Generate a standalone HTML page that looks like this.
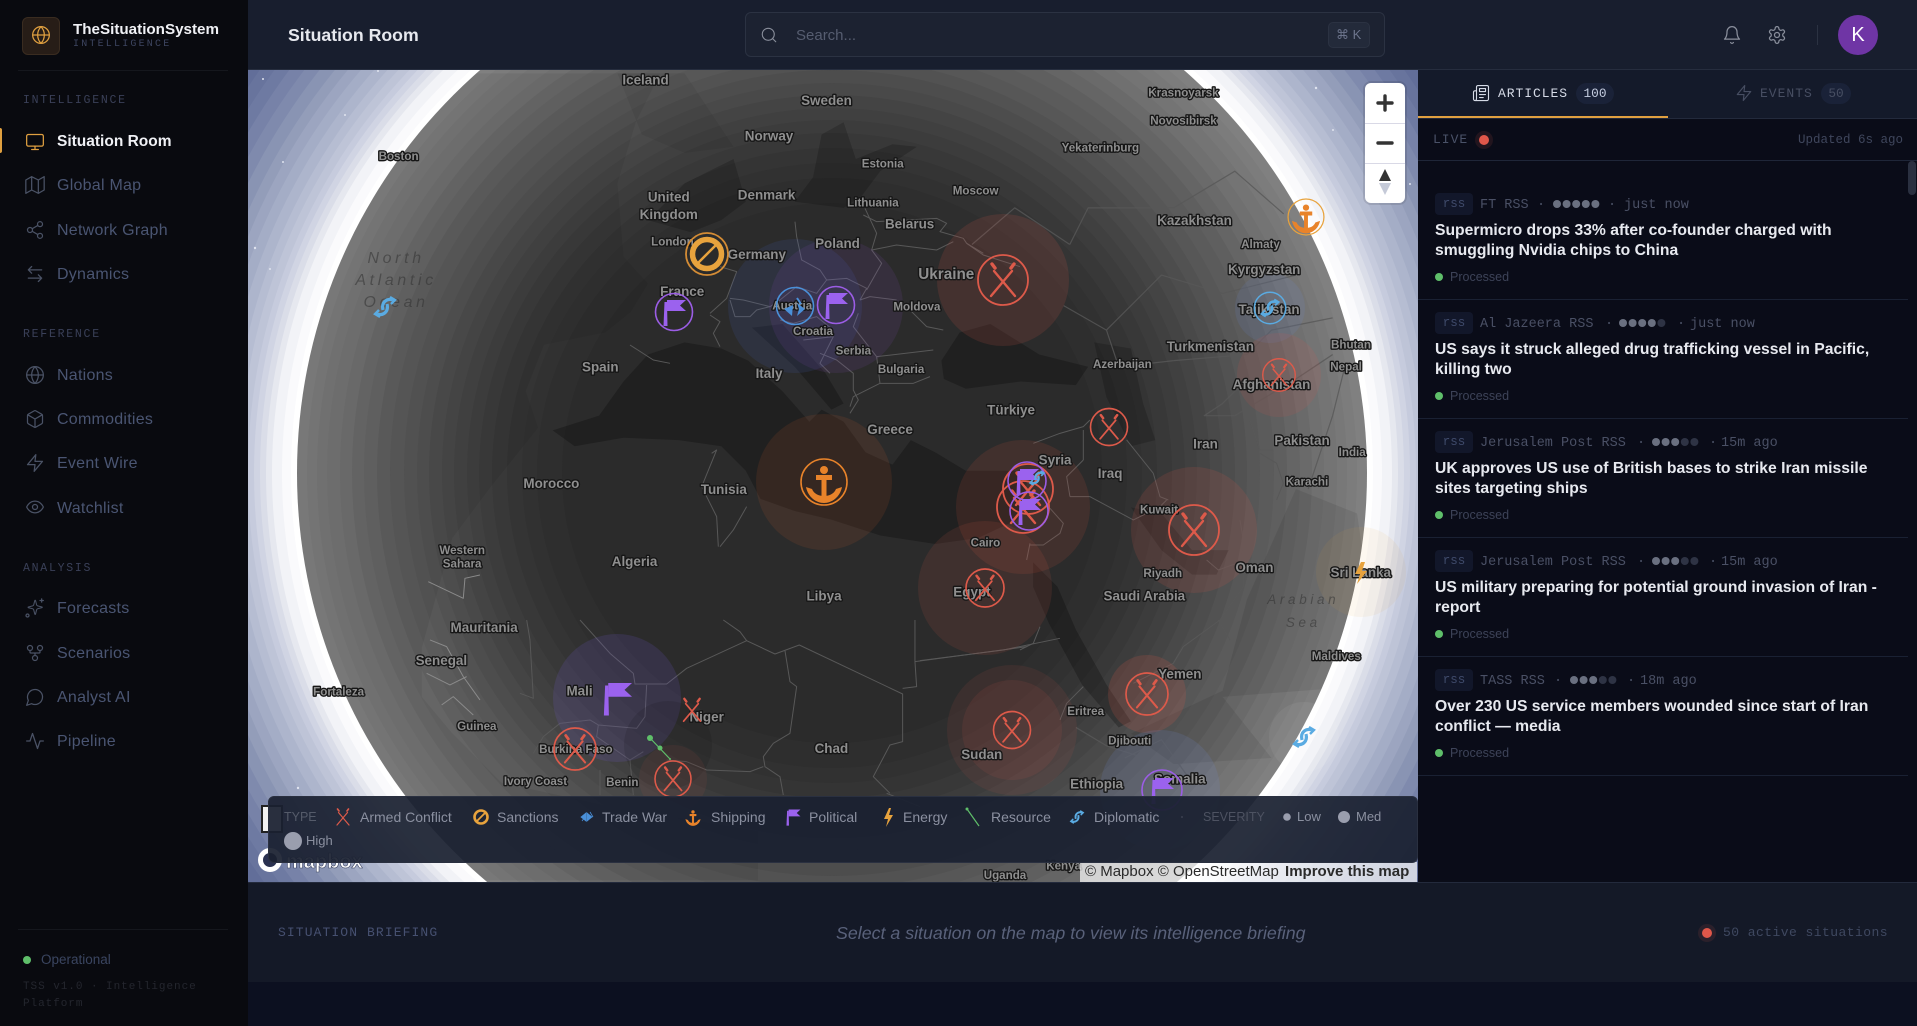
<!DOCTYPE html>
<html><head><meta charset="utf-8"><title>Situation Room</title>
<style>
html,body{margin:0;padding:0;width:1917px;height:1026px;overflow:hidden;background:#0c1020;font-family:"Liberation Sans",sans-serif}
.p{position:absolute}
.t{position:absolute;white-space:nowrap;line-height:20px;height:20px}
.m{font-family:"Liberation Mono",monospace}
.nav{left:57px;font-size:16px;letter-spacing:.25px;color:#4a5572}
.sec{left:23px;font-size:11.5px;letter-spacing:1.75px;color:#3a4058;font-family:"Liberation Mono",monospace}
.ttl{left:1435px;font-size:15.7px;font-weight:bold;color:#e7e9ef}
.proc{left:1450px;font-size:12.5px;color:#3d4358}
.rss{position:absolute;left:1435px;width:38px;height:22px;background:#12172a;border-radius:4px;color:#3f4a6a;font:12.5px/23px "Liberation Mono",monospace;text-align:center}
.meta{font:13.5px/20px "Liberation Mono",monospace;color:#4a5065;position:absolute;white-space:nowrap;height:20px}
.lg{font-size:14px;color:#8b90a0;top:807px}
svg text{font-family:"Liberation Sans",sans-serif}
.lb text{text-anchor:middle;paint-order:stroke;stroke:#161616;stroke-width:2.2px;fill:#8f8f8f;font-weight:bold;stroke-linejoin:round}
.s{font-size:9.5px}.n{font-size:11px}.b{font-size:12.5px}
.lb .f{fill:rgba(50,50,50,.55);stroke:none;font-style:italic;font-weight:normal;letter-spacing:3px}
.br polyline{fill:none;stroke:#585858;stroke-width:1;stroke-linejoin:round}
.i{fill:none;stroke:#4a5265;stroke-width:1.5;stroke-linecap:round;stroke-linejoin:round;overflow:visible}
</style></head><body>

<!-- MAP LAYER -->
<svg class="p" style="left:0;top:0" width="1917" height="1026" viewBox="0 0 1917 1026">
<defs>
<clipPath id="mc"><rect x="248" y="70" width="1170" height="812"/></clipPath>
<clipPath id="gc"><circle cx="832" cy="473" r="535"/></clipPath>
<g id="sw" fill="none" stroke="#dd5a4a" stroke-linecap="round">
<path d="M-11-16-8-12M11-16 8-12" stroke-width="3.4"/>
<path d="M-9-9 12 16M9-9-12 16" stroke-width="2.4"/>
</g>
<g id="fl"><path d="M-7-12H12L6-6.500 12-1H-7Z" fill="#9b62ee"/><path d="M-9.500-10-7-10-6.500 14H-10.500Z" fill="#9b62ee"/></g>
<g id="an" fill="#e8832a"><circle cx="0" cy="-12" r="4"/><path d="M-8-7H8V-2H2.500V16H-2.500V-2H-8Z"/><path d="M-18 5-12 7C-10 12-5 14 0 14S10 12 12 7L18 5C16 15 8 21 0 21S-16 15-18 5Z"/></g>
<g id="dp" fill="none" stroke="#5aabe2" stroke-width="3.2"><path d="M8-7C2-9-4-5-2 3"/><path d="M-8 7C-2 9 4 5 2-3"/><path d="M5-10 10-7 6-3M-5 10-10 7-6 3" stroke-width="2.4"/></g>
</defs>

<!-- background: concentric bands (clipped at map bottom) -->
<g clip-path="url(#mc)">
<rect x="248" y="70" width="1170" height="812" fill="#5c6892"/>
<path d="M249.2 882A712 712 0 1 1 1414.8 882Z" fill="#626e99"/>
<path d="M263.9 882A700 700 0 1 1 1400.1 882Z" fill="#68749d"/>
<path d="M278.8 882A688 688 0 1 1 1385.2 882Z" fill="#6e7aa2"/>
<path d="M293.8 882A676 676 0 1 1 1370.2 882Z" fill="#7782a8"/>
<path d="M308.9 882A664 664 0 1 1 1355.1 882Z" fill="#7f8aad"/>
<path d="M324.2 882A652 652 0 1 1 1339.8 882Z" fill="#8994b3"/>
<path d="M339.7 882A640 640 0 1 1 1324.3 882Z" fill="#939db9"/>
<path d="M352.8 882A630 630 0 1 1 1311.2 882Z" fill="#9ca5c0"/>
<path d="M366 882A620 620 0 1 1 1298 882Z" fill="#a4adc6"/>
<path d="M379.4 882A610 610 0 1 1 1284.6 882Z" fill="#adb5cc"/>
<path d="M393 882A600 600 0 1 1 1271 882Z" fill="#b6bdd2"/>
<path d="M404 882A592 592 0 1 1 1260 882Z" fill="#bec4d7"/>
<path d="M415.1 882A584 584 0 1 1 1248.9 882Z" fill="#c6cbdd"/>
<path d="M423.6 882A578 578 0 1 1 1240.4 882Z" fill="#d0d4e3"/>
<path d="M432.1 882A572 572 0 1 1 1231.9 882Z" fill="#dadde8"/>
<path d="M440.8 882A566 566 0 1 1 1223.2 882Z" fill="#e6e8ef"/>
<path d="M449.5 882A560 560 0 1 1 1214.5 882Z" fill="#f2f3f7"/>
<circle cx="832" cy="473" r="550" fill="#fafafc"/>
<circle cx="832" cy="473" r="541" fill="#ffffff"/>
<circle cx="832" cy="473" r="535" fill="#808080"/>
<circle cx="832" cy="473" r="525" fill="#7c7c7c"/>
<circle cx="832" cy="473" r="515" fill="#787878"/>
<circle cx="832" cy="473" r="505" fill="#747474"/>
<circle cx="832" cy="473" r="492" fill="#707070"/>
<circle cx="832" cy="473" r="480" fill="#6a6a6a"/>
<circle cx="832" cy="473" r="468" fill="#656565"/>
<circle cx="832" cy="473" r="455" fill="#5f5f5f"/>
<circle cx="832" cy="473" r="442" fill="#5b5b5b"/>
<circle cx="832" cy="473" r="428" fill="#575757"/>
<circle cx="832" cy="473" r="415" fill="#525252"/>
<circle cx="832" cy="473" r="403" fill="#4d4d4d"/>
<circle cx="832" cy="473" r="390" fill="#494949"/>
<circle cx="832" cy="473" r="378" fill="#444444"/>
<circle cx="832" cy="473" r="365" fill="#404040"/>
<circle cx="832" cy="473" r="353" fill="#3c3c3c"/>
<circle cx="832" cy="473" r="340" fill="#383838"/>
<circle cx="832" cy="473" r="325" fill="#343434"/>
<circle cx="832" cy="473" r="310" fill="#313131"/>
<circle cx="832" cy="473" r="295" fill="#2e2e2e"/>
<circle cx="832" cy="473" r="270" fill="#2b2b2b"/>
</g>

<g fill="#dfe3ef"><circle cx="263" cy="79" r="1"/><circle cx="345" cy="115" r="1"/><circle cx="378" cy="71" r="1"/><circle cx="283" cy="162" r="1"/><circle cx="255" cy="248" r="1.200"/><circle cx="270" cy="269" r="1"/><circle cx="1316" cy="88" r="1.200"/><circle cx="1333" cy="130" r="1"/><circle cx="1410" cy="184" r="1"/><circle cx="298" cy="788" r="1.200"/><circle cx="1320" cy="800" r="1"/></g>

<g clip-path="url(#gc)">
<g transform="scale(1.2226)">
<path d="M250 60H540L520 100 505 150 510 210 530 232 516 255 495 272 445 282 430 320 440 350 400 400 370 440 345 530 345 570 370 600 410 640 500 660 620 680 620 720H200Z" fill="#000" fill-opacity=".06"/>
<g fill="#000" fill-opacity=".18">
<path d="M452 352 490 340 510 312 530 290 560 280 590 285 612 295 640 320 662 345 672 335 690 345 708 370 730 380 745 360 765 370 790 385 830 385 840 395 832 425 800 440 765 445 720 438 680 425 650 418 622 408 610 385 590 365 555 360 510 358 470 365Z" fill-opacity=".25"/>
<path d="M615 268 640 265 675 305 690 330 680 335 650 300Z" fill-opacity=".25"/>
<path d="M770 295 785 272 810 265 850 290 890 300 880 315 835 312 790 318 772 310Z" fill-opacity=".25"/>
<path d="M895 280 925 285 935 330 945 360 925 365 905 325Z"/>
<path d="M925 415 950 420 975 450 1005 450 995 470 975 470 950 450Z"/>
<path d="M845 460 865 480 880 515 905 560 925 590 915 595 885 560 858 510 845 480Z" fill-opacity=".25"/>
<path d="M650 165 690 170 705 160 720 140 750 120 730 118 700 130 690 100 672 110 665 145Z"/>
<path d="M530 180 560 150 600 130 610 165 590 180 565 190Z"/>
<path d="M505 60 560 60 600 120 560 125 525 110Z" fill-opacity=".06"/>
</g>
<path d="M1060 400 1110 420 1130 560 1000 570 1040 620 960 625 925 600 1000 565 1020 490Z" fill="#000" fill-opacity=".08"/>
</g>

<!-- borders -->
<g class="br" transform="translate(620 200) scale(.3333)">
<polyline style="stroke-width:3" points="525,65 530,110 545,180 600,210 620,240"/>
<polyline style="stroke-width:3" points="735,25 770,100 755,150 785,190 740,270"/>
<polyline style="stroke-width:3" points="730,45 770,65 950,55 980,70 960,95 1030,115 1040,130 1090,160"/>
<polyline style="stroke-width:3" points="755,150 830,135 950,150 1000,125"/>
<polyline style="stroke-width:3" points="620,240 680,235 740,265 720,300"/>
<polyline style="stroke-width:3" points="330,295 370,300 450,320 480,300 530,260 590,280 620,240"/>
<polyline style="stroke-width:3" points="300,200 350,215 320,295 270,340"/>
<polyline style="stroke-width:3" points="270,345 300,365 280,400 300,440"/>
<polyline style="stroke-width:3" points="330,300 345,350 390,350 410,330 450,320"/>
<polyline style="stroke-width:3" points="480,360 520,370 590,350 640,390"/>
<polyline style="stroke-width:3" points="720,300 750,290 830,300"/>
<polyline style="stroke-width:3" points="715,340 700,380 770,470 940,450"/>
<polyline style="stroke-width:3" points="850,310 920,380 970,390"/>
<polyline style="stroke-width:3" points="770,470 780,550 700,590 690,620"/>
<polyline style="stroke-width:3" points="780,550 880,550 930,530"/>
<polyline style="stroke-width:3" points="600,460 650,480 700,520 700,570 715,600 690,640"/>
<polyline style="stroke-width:3" points="550,420 640,410 600,490 630,520"/>
<polyline style="stroke-width:3" points="275,760 290,750 245,860 290,950 295,1040"/>
<polyline style="stroke-width:3" points="380,920 340,990 300,1040"/>
<polyline style="stroke-width:3" points="30,435 100,480 150,490"/>
<polyline style="stroke-width:3" points="1040,130 1090,165 1200,200"/>
</g>
<g class="br" transform="translate(920 420) scale(.3333)">
<polyline style="stroke-width:3" points="490,120 440,170 450,230"/>
<polyline style="stroke-width:3" points="450,230 510,230 640,300 720,260 740,240"/>
<polyline style="stroke-width:3" points="390,265 430,310 420,340 370,375 330,375"/>
<polyline style="stroke-width:3" points="340,70 420,40 490,20 510,0"/>
<polyline style="stroke-width:3" points="490,30 490,120"/>
<polyline style="stroke-width:3" points="620,60 700,160 720,230 745,240"/>
<polyline style="stroke-width:3" points="860,420 895,450 950,430 970,420 970,500 900,600 790,680 760,730 640,790"/>
<polyline style="stroke-width:3" points="895,600 930,660"/>
<polyline style="stroke-width:3" points="960,300 970,360 960,420"/>
<polyline style="stroke-width:3" points="0,722 250,690 420,655"/>
<polyline style="stroke-width:3" points="330,370 320,420"/>
<polyline style="stroke-width:3" points="1020,100 1070,130 1090,190 1070,240"/>
<polyline style="stroke-width:3" points="990,0 1020,90 1060,90"/>
<polyline style="stroke-width:3" points="490,800 440,850 420,900"/>
<polyline style="stroke-width:3" points="360,620 340,670 300,690"/>
</g>
<g class="br" transform="translate(520 620) scale(.3333)">
<polyline style="stroke-width:3" points="180,0 270,100 340,160 345,192 440,192 500,145 680,62 765,102 838,75 1148,222 1148,365 1110,375 1060,470 1110,520"/>
<polyline style="stroke-width:3" points="795,92 810,185 830,200 810,340 760,370 730,410 735,440 780,470 790,525"/>
<polyline style="stroke-width:3" points="380,195 375,290 350,325 235,315 210,300 120,310 70,350 40,400"/>
<polyline style="stroke-width:3" points="235,315 230,350 330,420"/>
<polyline style="stroke-width:3" points="0,220 40,235 30,60 20,0"/>
<polyline style="stroke-width:3" points="1148,205 1190,200 1185,125 1520,80"/>
<polyline style="stroke-width:3" points="1185,125 1185,0"/>
<polyline style="stroke-width:3" points="440,420 500,425 560,450 690,455 730,440"/>
<polyline style="stroke-width:3" points="610,0 660,35 680,62"/>
<polyline style="stroke-width:3" points="370,395 330,420 340,525"/>
<polyline style="stroke-width:3" points="240,450 240,525"/>
<polyline style="stroke-width:3" points="1100,520 1200,560"/>
</g>
<g class="br" transform="translate(0 340) scale(.3333)">
<polyline style="stroke-width:3;stroke:#8a8a8a" points="1285,725 1390,775 1395,715 1440,705"/>
<polyline style="stroke-width:3;stroke:#8a8a8a" points="1290,900 1340,920 1390,1010 1440,1080"/>
<polyline style="stroke-width:3;stroke:#8a8a8a" points="1280,1000 1350,1035 1400,1010"/>
<polyline style="stroke-width:3;stroke:#8a8a8a" points="1325,1095 1360,1070 1420,1125"/>
</g>
<g class="br" transform="scale(1.2226)" style="opacity:.8">
<polyline points="875,200 890,170 960,170 1010,140 1050,175"/>
<polyline points="905,270 950,225 1000,240 1060,225"/>
<polyline points="960,295 1020,290 1040,270 1090,260"/>
<polyline points="1010,340 1060,310 1090,290"/>
<polyline points="1070,400 1090,340 1100,300"/>
<polyline points="870,250 905,270 915,300 960,295"/>
<polyline points="795,200 830,170 875,200"/>
<polyline points="1045,75 1060,130 1075,175"/>
<polyline points="1020,310 1000,330 985,340 1010,340"/>
<polyline points="920,620 950,605 975,640"/>
<polyline points="880,595 905,610 930,618"/>
</g>
</g>

<!-- halos -->
<g>
<circle cx="795" cy="306" r="67" fill="#4a6ed9" fill-opacity=".12"/>
<circle cx="836" cy="306" r="67" fill="#9b5de5" fill-opacity=".1"/>
<circle cx="1003" cy="280" r="66" fill="#d9574a" fill-opacity=".15"/>
<circle cx="824" cy="482" r="68" fill="#e8632a" fill-opacity=".11"/>
<circle cx="1023" cy="507" r="67" fill="#d9573a" fill-opacity=".13"/>
<circle cx="985" cy="588" r="67" fill="#d9574a" fill-opacity=".12"/>
<circle cx="1194" cy="530" r="63" fill="#d9574a" fill-opacity=".15"/>
<circle cx="1147" cy="694" r="39" fill="#d9574a" fill-opacity=".18"/>
<circle cx="1012" cy="730" r="65" fill="#d9574a" fill-opacity=".09"/>
<circle cx="1012" cy="730" r="50" fill="#d9574a" fill-opacity=".1"/>
<circle cx="617" cy="698" r="64" fill="#7a5de5" fill-opacity=".15"/>
<circle cx="668" cy="745" r="44" fill="#000" fill-opacity=".1"/>
<circle cx="673" cy="779" r="34" fill="#d9574a" fill-opacity=".08"/>
<circle cx="1160" cy="790" r="60" fill="#6f8ad9" fill-opacity=".15"/>
<circle cx="1304" cy="737" r="35" fill="#fff" fill-opacity=".06"/>
<circle cx="1270" cy="308" r="35" fill="#6f8ad9" fill-opacity=".13"/>
<circle cx="1279" cy="375" r="42" fill="#d9574a" fill-opacity=".13"/>
<circle cx="1361" cy="572" r="45" fill="#e8a33d" fill-opacity=".08"/>
</g>

<!-- labels -->
<g class="lb" transform="scale(1.2226)">
<text class="f" x="324" y="215" font-size="13">North</text><text class="f" x="324" y="233" font-size="13">Atlantic</text><text class="f" x="324" y="251" font-size="13">Ocean</text>
<text class="f" x="1066" y="494" font-size="11">Arabian</text><text class="f" x="1066" y="513" font-size="11">Sea</text>
<text class="n" x="528" y="69">Iceland</text><text class="n" x="676" y="86">Sweden</text><text class="n" x="629" y="115">Norway</text>
<text class="s" x="722" y="137">Estonia</text><text class="n" x="547" y="165">United</text><text class="n" x="547" y="179">Kingdom</text><text class="n" x="627" y="163">Denmark</text>
<text class="s" x="714" y="169">Lithuania</text><text class="n" x="744" y="187">Belarus</text><text class="s" x="798" y="159">Moscow</text><text class="s" x="326" y="131">Boston</text>
<text class="s" x="550" y="201">London</text><text class="n" x="619" y="212">Germany</text><text class="n" x="685" y="203">Poland</text><text class="b" x="774" y="228">Ukraine</text>
<text class="n" x="558" y="242">France</text><text class="s" x="750" y="254">Moldova</text><text class="s" x="648" y="253">Austria</text><text class="s" x="665" y="274">Croatia</text>
<text class="s" x="698" y="290">Serbia</text><text class="n" x="491" y="304">Spain</text><text class="n" x="629" y="309">Italy</text><text class="s" x="737" y="305">Bulgaria</text>
<text class="n" x="827" y="339">Türkiye</text><text class="n" x="728" y="355">Greece</text><text class="n" x="863" y="380">Syria</text><text class="n" x="908" y="391">Iraq</text><text class="n" x="986" y="367">Iran</text>
<text class="s" x="918" y="301">Azerbaijan</text><text class="n" x="990" y="287">Turkmenistan</text><text class="n" x="1040" y="318">Afghanistan</text><text class="n" x="1065" y="364">Pakistan</text>
<text class="s" x="1101" y="303">Nepal</text><text class="s" x="1105" y="285">Bhutan</text><text class="s" x="1106" y="373">India</text><text class="s" x="1069" y="397">Karachi</text>
<text class="n" x="977" y="184">Kazakhstan</text><text class="s" x="1031" y="203">Almaty</text><text class="n" x="1034" y="224">Kyrgyzstan</text><text class="n" x="1038" y="257">Tajikistan</text>
<text class="s" x="968" y="79">Krasnoyarsk</text><text class="s" x="968" y="102">Novosibirsk</text><text class="s" x="900" y="124">Yekaterinburg</text>
<text class="n" x="451" y="399">Morocco</text><text class="n" x="592" y="404">Tunisia</text><text class="n" x="519" y="463">Algeria</text><text class="n" x="674" y="491">Libya</text>
<text class="s" x="378" y="453">Western</text><text class="s" x="378" y="464">Sahara</text><text class="n" x="396" y="517">Mauritania</text><text class="n" x="361" y="544">Senegal</text>
<text class="s" x="277" y="569">Fortaleza</text><text class="s" x="390" y="597">Guinea</text><text class="s" x="471" y="616">Burkina Faso</text><text class="s" x="438" y="642">Ivory Coast</text><text class="s" x="509" y="643">Benin</text>
<text class="n" x="474" y="569">Mali</text><text class="n" x="578" y="590">Niger</text><text class="n" x="680" y="616">Chad</text><text class="s" x="806" y="447">Cairo</text><text class="n" x="795" y="488">Egypt</text>
<text class="s" x="951" y="472">Riyadh</text><text class="n" x="936" y="491">Saudi Arabia</text><text class="s" x="948" y="420">Kuwait</text><text class="n" x="1026" y="468">Oman</text><text class="n" x="965" y="555">Yemen</text>
<text class="s" x="888" y="585">Eritrea</text><text class="s" x="924" y="609">Djibouti</text><text class="n" x="803" y="621">Sudan</text><text class="n" x="897" y="645">Ethiopia</text><text class="n" x="965" y="641">Somalia</text>
<text class="n" x="1113" y="472">Sri Lanka</text><text class="s" x="1093" y="540">Maldives</text><text class="s" x="822" y="719">Uganda</text><text class="s" x="870" y="711">Kenya</text>
</g>

<!-- markers -->
<g fill="none">
<g transform="translate(707 254)"><circle r="21" stroke="#d48c35" stroke-width="1.800"/><circle r="14.500" stroke="#e8a33d" stroke-width="5.500" fill="#2a2a2a"/><path d="M-11 11 11-11" stroke="#e8a33d" stroke-width="2.500"/></g>
<g transform="translate(674 312)"><circle r="18.500" stroke="#9b5de5" stroke-width="1.600"/><use href="#fl"/></g>
<g transform="translate(795 306)"><circle r="18.500" stroke="#4a90d9" stroke-width="1.600"/><path d="M-2-1-11 3-3 10ZM2-3 10 3 2 10 4 3Z" fill="#4a90d9"/><path d="M2-8 6-2" stroke="#4a90d9" stroke-width="2"/></g>
<g transform="translate(836 305)"><circle r="18.500" stroke="#9b5de5" stroke-width="1.600"/><use href="#fl"/></g>
<g transform="translate(1003 280)"><circle r="25" stroke="#dd5a4a" stroke-width="1.800"/><use href="#sw"/></g>
<g transform="translate(824 482)"><circle r="23" stroke="#e8832a" stroke-width="1.600"/><use href="#an"/></g>
<g transform="translate(1028 489)"><circle r="25" stroke="#dd5a4a" stroke-width="1.800"/><use href="#sw"/></g>
<g transform="translate(1023 507)"><circle r="26" stroke="#dd5a4a" stroke-width="1.800"/><use href="#sw"/></g>
<g transform="translate(1027 481)"><circle r="19" stroke="#9b5de5" stroke-width="1.600"/><use href="#fl"/></g>
<g transform="translate(1029 511)"><circle r="19" stroke="#9b5de5" stroke-width="1.600"/><use href="#fl"/></g>
<g transform="translate(1037 478) scale(.7)"><use href="#dp"/></g>
<g transform="translate(985 588) scale(.76)"><circle r="25" stroke="#dd5a4a" stroke-width="2.200"/><use href="#sw"/></g>
<g transform="translate(1194 530)"><circle r="25" stroke="#dd5a4a" stroke-width="1.800"/><use href="#sw"/></g>
<g transform="translate(1147 694) scale(.84)"><circle r="25" stroke="#dd5a4a" stroke-width="2"/><use href="#sw"/></g>
<g transform="translate(1109 427) scale(.74)"><circle r="25" stroke="#dd5a4a" stroke-width="2.200"/><use href="#sw"/></g>
<g transform="translate(1012 730) scale(.74)"><circle r="25" stroke="#dd5a4a" stroke-width="2.200"/><use href="#sw"/></g>
<g transform="translate(575 749) scale(.84)"><circle r="25" stroke="#dd5a4a" stroke-width="2"/><use href="#sw"/></g>
<g transform="translate(673 779) scale(.72)"><circle r="25" stroke="#dd5a4a" stroke-width="2.200"/><use href="#sw"/></g>
<g transform="translate(692 710) scale(.7)"><use href="#sw"/></g>
<g transform="translate(617 698) scale(1.25)"><use href="#fl"/></g>
<g transform="translate(1162 790)"><circle r="20" stroke="#9b5de5" stroke-width="1.600"/><use href="#fl"/></g>
<g transform="translate(1306 217) scale(.78)"><circle r="23" stroke="#e8a33d" stroke-width="1.600"/><use href="#an"/></g>
<g transform="translate(1270 308) scale(.85)"><circle r="18.500" stroke="#5aabe2" stroke-width="1.800"/><use href="#dp"/></g>
<g transform="translate(1279 375) scale(.65)"><circle r="25" stroke="#dd5a4a" stroke-width="2.200"/><use href="#sw"/></g>
<g transform="translate(385 307)"><use href="#dp"/></g>
<g transform="translate(1304 737)"><use href="#dp"/></g>
<path d="M1361 562 1355 574H1360L1357 584 1367 571H1362L1365 562Z" fill="#e8a33d"/>
<path d="M650 738 670 759" stroke="#5fbf6a" stroke-width="1.200"/><circle cx="650" cy="738" r="3" fill="#5fbf6a"/><circle cx="660" cy="748" r="2.500" fill="#5fbf6a"/><circle cx="670" cy="759" r="1" fill="#5fbf6a"/>
</g>

<!-- mapbox -->
<rect x="262" y="806" width="20" height="26" fill="#f2f2f2" stroke="#222" stroke-width="2"/>
<circle cx="270" cy="860" r="9.500" fill="#2a3150" stroke="#fff" stroke-width="5"/>
<text x="286" y="868" font-size="20" font-weight="bold" fill="#fff" stroke="#3a4260" stroke-width=".6">mapbox</text>
<rect x="1080" y="862" width="337" height="20" fill="#fff" fill-opacity=".7"/>
</svg>

<!-- Attribution -->
<div class="t" style="left:1085px;top:861px;font-size:15px;color:#2a2a2a;line-height:22px;height:22px">© Mapbox © OpenStreetMap <b style="margin-left:2px">Improve this map</b></div>

<!-- Zoom ctrl -->
<div class="p" style="left:1365px;top:83px;width:40px;height:120px;background:#fff;border-radius:6px;box-shadow:0 0 0 2px rgba(0,0,0,.1)"></div>
<div class="p" style="left:1365px;top:123px;width:40px;height:1px;background:#d9d9e6"></div>
<div class="p" style="left:1365px;top:163px;width:40px;height:1px;background:#d9d9e6"></div>
<svg class="p" style="left:1365px;top:83px" width="40" height="120"><path d="M13 20H27M20 13V27M13 60H27" stroke="#333" stroke-width="3.400" stroke-linecap="round"/><path d="M20 86 26 98H14Z" fill="#333"/><path d="M20 112 26 100H14Z" fill="#c5cad8"/></svg>

<!-- Legend -->
<div class="p" style="left:268px;top:796px;width:1148px;height:65px;background:rgba(26,32,48,.93);border:1px solid #2a3040;border-radius:6px;box-sizing:content-box"></div>
<div class="t" style="left:284px;top:807px;font-size:12.500px;color:#555b6a">TYPE</div>
<div class="t lg" style="left:360px">Armed Conflict</div>
<div class="t lg" style="left:497px">Sanctions</div>
<div class="t lg" style="left:602px">Trade War</div>
<div class="t lg" style="left:711px">Shipping</div>
<div class="t lg" style="left:809px">Political</div>
<div class="t lg" style="left:903px">Energy</div>
<div class="t lg" style="left:991px">Resource</div>
<div class="t lg" style="left:1094px">Diplomatic</div>
<div class="t" style="left:1203px;top:807px;font-size:12.500px;color:#4d5261">SEVERITY</div>
<div class="t lg" style="left:1297px;font-size:13px">Low</div>
<div class="t lg" style="left:1356px;font-size:13px">Med</div>
<div class="t lg" style="left:306px;top:831px;font-size:13px">High</div>
<svg class="p" style="left:0;top:0" width="1917" height="1026">
<g transform="translate(343 817) scale(.5)"><use href="#sw"/></g>
<g transform="translate(481 817)"><circle r="6.500" fill="none" stroke="#e8a33d" stroke-width="2.600"/><path d="M-4 4 4-4" stroke="#e8a33d" stroke-width="1.800"/></g>
<path d="M581 817 586 813V821ZM592 817 587 813V821ZM590 812 593 817M585 817 582 821" fill="#4a90d9" stroke="#4a90d9" stroke-width=".8"/>
<g transform="translate(693 817) scale(.42)"><use href="#an"/></g>
<g transform="translate(793 817) scale(.62)"><use href="#fl"/></g>
<path d="M889 808 884 819H888L886 827 893 815H889L891 808Z" fill="#e8a33d"/>
<path d="M967 809 979 826" stroke="#5fbf6a" stroke-width="1.200"/><circle cx="967" cy="809" r="1.500" fill="#5fbf6a"/>
<g transform="translate(1077 817) scale(.62)"><use href="#dp"/></g>
<circle cx="1182" cy="817" r="1" fill="#3a4050"/>
<circle cx="1287" cy="817" r="3.800" fill="#9a9eae"/>
<circle cx="1344" cy="817" r="6" fill="#9a9eae"/>
<circle cx="293" cy="841" r="9" fill="#9a9eae"/>
</svg>

<!-- Header -->
<div class="p" style="left:248px;top:0;width:1669px;height:69px;background:#181e2e;border-bottom:1px solid #262d3e"></div>
<div class="t" style="left:288px;top:24px;font-size:17.700px;line-height:22px;height:22px;font-weight:bold;color:#e7e9ef">Situation Room</div>
<div class="p" style="left:745px;top:12px;width:638px;height:43px;background:#1c2231;border:1px solid #2b3242;border-radius:6px"></div>
<div class="t" style="left:796px;top:26px;font-size:15px;color:#565d70">Search...</div>
<div class="p" style="left:1328px;top:22px;width:40px;height:24px;background:#232a3a;border:1px solid #2b3242;border-radius:5px"></div>
<div class="t" style="left:1336px;top:25px;font-size:13px;color:#6c748c;font-family:'Liberation Sans','DejaVu Sans',sans-serif">⌘ K</div>
<div class="p" style="left:1817px;top:25px;width:1px;height:20px;background:#2b3242"></div>
<div class="p" style="left:1838px;top:15px;width:40px;height:40px;border-radius:50%;background:#6f35a5;color:#fff;font-size:20px;line-height:40px;text-align:center">K</div>

<!-- Sidebar -->
<div class="p" style="left:0;top:0;width:248px;height:1026px;background:#090a0f"></div>
<div class="p" style="left:22px;top:17px;width:36px;height:36px;background:#271d17;border:1px solid #3a2c20;border-radius:6px"></div>
<div class="t" style="left:73px;top:20px;font-size:15.200px;font-weight:bold;color:#f0f1f5">TheSituationSystem</div>
<div class="t m" style="left:73px;top:35px;font-size:10px;letter-spacing:2.200px;color:#3d4560">INTELLIGENCE</div>
<div class="p" style="left:18px;top:70px;width:210px;height:1px;background:#15171d"></div>
<div class="p" style="left:0;top:128px;width:2px;height:25px;background:#e0a040;border-radius:0 2px 2px 0"></div>
<div class="t sec" style="top:91px">INTELLIGENCE</div>
<div class="t nav" style="top:132px;color:#f0f1f5;font-weight:bold;letter-spacing:0;font-size:15.500px">Situation Room</div>
<div class="t nav" style="top:176px">Global Map</div>
<div class="t nav" style="top:221px">Network Graph</div>
<div class="t nav" style="top:265px">Dynamics</div>
<div class="t sec" style="top:325px">REFERENCE</div>
<div class="t nav" style="top:366px">Nations</div>
<div class="t nav" style="top:410px">Commodities</div>
<div class="t nav" style="top:454px">Event Wire</div>
<div class="t nav" style="top:499px">Watchlist</div>
<div class="t sec" style="top:559px">ANALYSIS</div>
<div class="t nav" style="top:599px">Forecasts</div>
<div class="t nav" style="top:644px">Scenarios</div>
<div class="t nav" style="top:688px">Analyst AI</div>
<div class="t nav" style="top:732px">Pipeline</div>
<div class="p" style="left:18px;top:929px;width:210px;height:1px;background:#15171d"></div>
<div class="t" style="left:41px;top:950px;font-size:13.500px;color:#3a4560">Operational</div>
<div class="t m" style="left:23px;top:977px;font-size:11px;letter-spacing:.95px;color:#24262e">TSS v1.0 · Intelligence</div>
<div class="t m" style="left:23px;top:994px;font-size:11px;letter-spacing:.95px;color:#24262e">Platform</div>

<!-- Right panel -->
<div class="p" style="left:1418px;top:70px;width:499px;height:48px;background:#141a2a;border-bottom:1px solid #232a3c"></div>
<div class="p" style="left:1418px;top:116px;width:250px;height:2px;background:#e0a040"></div>
<div class="p" style="left:1418px;top:119px;width:499px;height:763px;background:#0a0c18"></div>
<div class="p" style="left:1418px;top:160px;width:499px;height:1px;background:#1f2638"></div>
<div class="t m" style="left:1498px;top:84px;font-size:13px;letter-spacing:.95px;color:#d5dae6">ARTICLES</div>
<div class="p m" style="left:1576px;top:83px;width:38px;height:21px;background:#1a2238;border-radius:11px;color:#c5cde0;font-size:12.800px;line-height:22px;text-align:center">100</div>
<div class="t m" style="left:1760px;top:84px;font-size:13px;letter-spacing:1px;color:#474e62">EVENTS</div>
<div class="p m" style="left:1821px;top:83px;width:30px;height:21px;background:#1a2238;border-radius:11px;color:#474e62;font-size:12.800px;line-height:22px;text-align:center">50</div>
<div class="t m" style="left:1433px;top:130px;font-size:13px;letter-spacing:1px;color:#4a5268">LIVE</div>
<div class="t m" style="left:1798px;top:130px;font-size:12.500px;color:#3f465c">Updated 6s ago</div>
<div class="p" style="left:1908px;top:161px;width:8px;height:34px;background:#2a3040;border-radius:4px"></div>

<!-- cards -->
<div class="rss" style="top:193px">rss</div>
<div class="meta" style="left:1480px;top:196px">FT RSS</div><div class="meta" style="left:1537px;top:196px">·</div><div class="meta" style="left:1608px;top:196px">·</div><div class="meta" style="left:1624px;top:196px">just now</div>
<div class="t ttl" style="top:221px">Supermicro drops 33% after co-founder charged with</div>
<div class="t ttl" style="top:241px">smuggling Nvidia chips to China</div>
<div class="t proc" style="top:267px">Processed</div>
<div class="p" style="left:1418px;top:299px;width:490px;height:1px;background:#1a2133"></div>

<div class="rss" style="top:312px">rss</div>
<div class="meta" style="left:1480px;top:315px">Al Jazeera RSS</div><div class="meta" style="left:1605px;top:315px">·</div><div class="meta" style="left:1677px;top:315px">·</div><div class="meta" style="left:1690px;top:315px">just now</div>
<div class="t ttl" style="top:340px">US says it struck alleged drug trafficking vessel in Pacific,</div>
<div class="t ttl" style="top:360px">killing two</div>
<div class="t proc" style="top:386px">Processed</div>
<div class="p" style="left:1418px;top:418px;width:490px;height:1px;background:#1a2133"></div>

<div class="rss" style="top:431px">rss</div>
<div class="meta" style="left:1480px;top:434px">Jerusalem Post RSS</div><div class="meta" style="left:1637px;top:434px">·</div><div class="meta" style="left:1709px;top:434px">·</div><div class="meta" style="left:1721px;top:434px">15m ago</div>
<div class="t ttl" style="top:459px">UK approves US use of British bases to strike Iran missile</div>
<div class="t ttl" style="top:479px">sites targeting ships</div>
<div class="t proc" style="top:505px">Processed</div>
<div class="p" style="left:1418px;top:537px;width:490px;height:1px;background:#1a2133"></div>

<div class="rss" style="top:550px">rss</div>
<div class="meta" style="left:1480px;top:553px">Jerusalem Post RSS</div><div class="meta" style="left:1637px;top:553px">·</div><div class="meta" style="left:1709px;top:553px">·</div><div class="meta" style="left:1721px;top:553px">15m ago</div>
<div class="t ttl" style="top:578px">US military preparing for potential ground invasion of Iran -</div>
<div class="t ttl" style="top:598px">report</div>
<div class="t proc" style="top:624px">Processed</div>
<div class="p" style="left:1418px;top:656px;width:490px;height:1px;background:#1a2133"></div>

<div class="rss" style="top:669px">rss</div>
<div class="meta" style="left:1480px;top:672px">TASS RSS</div><div class="meta" style="left:1554px;top:672px">·</div><div class="meta" style="left:1627px;top:672px">·</div><div class="meta" style="left:1640px;top:672px">18m ago</div>
<div class="t ttl" style="top:697px">Over 230 US service members wounded since start of Iran</div>
<div class="t ttl" style="top:717px">conflict — media</div>
<div class="t proc" style="top:743px">Processed</div>
<div class="p" style="left:1418px;top:775px;width:490px;height:1px;background:#1a2133"></div>

<!-- Briefing -->
<div class="p" style="left:248px;top:882px;width:1669px;height:100px;background:#141927;box-shadow:inset 0 1px 0 #232a3c"></div>
<div class="p" style="left:248px;top:982px;width:1669px;height:44px;background:#0c1020"></div>
<div class="t m" style="left:278px;top:923px;font-size:13px;letter-spacing:1.100px;color:#465070">SITUATION BRIEFING</div>
<div class="t" style="left:836px;top:923px;font-size:17.800px;font-style:italic;color:#59617a">Select a situation on the map to view its intelligence briefing</div>
<div class="t m" style="left:1723px;top:923px;font-size:13px;letter-spacing:.45px;color:#3f4860">50 active situations</div>

<!-- overlay icons -->
<svg class="p" style="left:0;top:0" width="1917" height="1026">
<circle cx="27" cy="960" r="4" fill="#5fbf6a"/>
<circle cx="1484" cy="140" r="9" fill="#d9574a" fill-opacity=".12"/><circle cx="1484" cy="140" r="5" fill="#e0574a"/>
<circle cx="1707" cy="933" r="9" fill="#d9574a" fill-opacity=".12"/><circle cx="1707" cy="933" r="5" fill="#e0574a"/>
<g fill="#5fbf6a"><circle cx="1439" cy="277" r="4"/><circle cx="1439" cy="396" r="4"/><circle cx="1439" cy="515" r="4"/><circle cx="1439" cy="634" r="4"/><circle cx="1439" cy="753" r="4"/></g>
<g fill="#6a7080">
<circle cx="1557" cy="204" r="4"/><circle cx="1566.600" cy="204" r="4"/><circle cx="1576.200" cy="204" r="4"/><circle cx="1585.800" cy="204" r="4"/><circle cx="1595.400" cy="204" r="4"/>
<circle cx="1623" cy="323" r="4"/><circle cx="1632.600" cy="323" r="4"/><circle cx="1642.200" cy="323" r="4"/><circle cx="1651.800" cy="323" r="4"/>
<circle cx="1656" cy="442" r="4"/><circle cx="1665.600" cy="442" r="4"/><circle cx="1675.200" cy="442" r="4"/>
<circle cx="1656" cy="561" r="4"/><circle cx="1665.600" cy="561" r="4"/><circle cx="1675.200" cy="561" r="4"/>
<circle cx="1574" cy="680" r="4"/><circle cx="1583.600" cy="680" r="4"/><circle cx="1593.200" cy="680" r="4"/>
</g>
<g fill="#2e3344">
<circle cx="1661.400" cy="323" r="4"/>
<circle cx="1684.800" cy="442" r="4"/><circle cx="1694.400" cy="442" r="4"/>
<circle cx="1684.800" cy="561" r="4"/><circle cx="1694.400" cy="561" r="4"/>
<circle cx="1602.800" cy="680" r="4"/><circle cx="1612.400" cy="680" r="4"/>
</g>

<!-- logo globe -->
<svg class="i" x="31" y="25" width="20" height="20" viewBox="0 0 24 24" style="stroke:#e0a040"><circle cx="12" cy="12" r="10"/><path d="M12 2a14.500 14.500 0 0 0 0 20 14.500 14.500 0 0 0 0-20"/><path d="M2 12h20"/></svg>
<!-- nav icons -->
<svg class="i" x="25" y="132" width="20" height="20" viewBox="0 0 24 24" style="stroke:#e0a040"><rect x="2" y="3" width="20" height="14" rx="2"/><path d="M8 21h8M12 17v4"/></svg>
<svg class="i" x="25" y="175" width="20" height="20" viewBox="0 0 24 24"><path d="M1 6V22L8 18 16 22 23 18V2L16 6 8 2ZM8 2V18M16 6V22"/></svg>
<svg class="i" x="25" y="220" width="20" height="20" viewBox="0 0 24 24"><circle cx="18" cy="5" r="3"/><circle cx="6" cy="12" r="3"/><circle cx="18" cy="19" r="3"/><path d="M8.590 13.510 15.420 17.490M15.410 6.510 8.590 10.490"/></svg>
<svg class="i" x="25" y="264" width="20" height="20" viewBox="0 0 24 24"><path d="M8 3 4 7l4 4M4 7h16M16 21l4-4-4-4M20 17H4"/></svg>
<svg class="i" x="25" y="365" width="20" height="20" viewBox="0 0 24 24"><circle cx="12" cy="12" r="10"/><path d="M12 2a14.500 14.500 0 0 0 0 20 14.500 14.500 0 0 0 0-20"/><path d="M2 12h20"/></svg>
<svg class="i" x="25" y="409" width="20" height="20" viewBox="0 0 24 24"><path d="M21 8a2 2 0 0 0-1-1.730l-7-4a2 2 0 0 0-2 0l-7 4A2 2 0 0 0 3 8v8a2 2 0 0 0 1 1.730l7 4a2 2 0 0 0 2 0l7-4A2 2 0 0 0 21 16Z"/><path d="m3.300 7 8.700 5 8.700-5M12 22V12"/></svg>
<svg class="i" x="25" y="453" width="20" height="20" viewBox="0 0 24 24"><path d="M13 2 3 14h9l-1 8 10-12h-9l1-8z"/></svg>
<svg class="i" x="25" y="497" width="20" height="20" viewBox="0 0 24 24"><path d="M2 12s3-7 10-7 10 7 10 7-3 7-10 7-10-7-10-7Z"/><circle cx="12" cy="12" r="3"/></svg>
<svg class="i" x="25" y="598" width="20" height="20" viewBox="0 0 24 24"><path d="M9.937 15.500A2 2 0 0 0 8.500 14.063l-6.135-1.582a.500.500 0 0 1 0-.962L8.500 9.936A2 2 0 0 0 9.937 8.500l1.582-6.135a.500.500 0 0 1 .963 0L14.063 8.500A2 2 0 0 0 15.500 9.937l6.135 1.581a.500.500 0 0 1 0 .964L15.500 14.063a2 2 0 0 0-1.437 1.437l-1.582 6.135a.500.500 0 0 1-.963 0z" transform="translate(2 1) scale(.85)"/><path d="M20 1v4M22 3h-4"/><circle cx="3" cy="21" r="1.800"/></svg>
<svg class="i" x="25" y="643" width="20" height="20" viewBox="0 0 24 24"><circle cx="12" cy="18" r="3"/><circle cx="6" cy="6" r="3"/><circle cx="18" cy="6" r="3"/><path d="M18 9v2c0 .600-.400 1-1 1H7c-.600 0-1-.400-1-1V9M12 12v3"/></svg>
<svg class="i" x="25" y="687" width="20" height="20" viewBox="0 0 24 24"><path d="M7.900 20A9 9 0 1 0 4 16.100L2 22Z"/></svg>
<svg class="i" x="25" y="731" width="20" height="20" viewBox="0 0 24 24"><path d="M22 12h-4l-3 9L9 3l-3 9H2"/></svg>
<!-- header icons -->
<svg class="i" x="760" y="26" width="18" height="18" viewBox="0 0 24 24" style="stroke:#8a8f9c"><circle cx="11" cy="11" r="8"/><path d="m21 21-4.300-4.300"/></svg>
<svg class="i" x="1722" y="25" width="20" height="20" viewBox="0 0 24 24" style="stroke:#8a8f9c"><path d="M6 8a6 6 0 0 1 12 0c0 7 3 9 3 9H3s3-2 3-9"/><path d="M10.300 21a1.940 1.940 0 0 0 3.400 0"/></svg>
<svg class="i" x="1767" y="25" width="20" height="20" viewBox="0 0 24 24" style="stroke:#8a8f9c"><path d="M12.220 2h-.44a2 2 0 0 0-2 2v.18a2 2 0 0 1-1 1.730l-.43.25a2 2 0 0 1-2 0l-.15-.08a2 2 0 0 0-2.730.73l-.22.38a2 2 0 0 0 .73 2.730l.15.1a2 2 0 0 1 1 1.720v.51a2 2 0 0 1-1 1.740l-.15.09a2 2 0 0 0-.73 2.730l.22.38a2 2 0 0 0 2.730.73l.15-.08a2 2 0 0 1 2 0l.43.25a2 2 0 0 1 1 1.730V20a2 2 0 0 0 2 2h.44a2 2 0 0 0 2-2v-.18a2 2 0 0 1 1-1.730l.43-.25a2 2 0 0 1 2 0l.15.08a2 2 0 0 0 2.730-.73l.22-.39a2 2 0 0 0-.73-2.730l-.15-.08a2 2 0 0 1-1-1.740v-.5a2 2 0 0 1 1-1.740l.15-.09a2 2 0 0 0 .73-2.730l-.22-.38a2 2 0 0 0-2.730-.73l-.15.08a2 2 0 0 1-2 0l-.43-.25a2 2 0 0 1-1-1.730V4a2 2 0 0 0-2-2z"/><circle cx="12" cy="12" r="3"/></svg>
<!-- tab icons -->
<svg class="i" x="1472" y="84" width="18" height="18" viewBox="0 0 24 24" style="stroke:#d5dae6"><path d="M4 22h16a2 2 0 0 0 2-2V4a2 2 0 0 0-2-2H8a2 2 0 0 0-2 2v16a2 2 0 0 1-2 2Zm0 0a2 2 0 0 1-2-2v-9c0-1.100.9-2 2-2h2M18 14h-8M15 18h-5M10 6h8v4h-8Z"/></svg>
<svg class="i" x="1735" y="84" width="18" height="18" viewBox="0 0 24 24" style="stroke:#474e62"><path d="M13 2 3 14h9l-1 8 10-12h-9l1-8z"/></svg>
</svg>
</body></html>
